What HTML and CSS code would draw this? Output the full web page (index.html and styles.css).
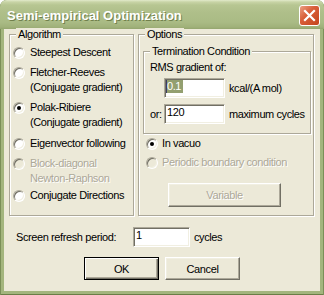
FILE: index.html
```html
<!doctype html>
<html lang="en">
<head>
    <meta charset="UTF-8">
    <title>Semi-empirical Optimization</title>
    <link rel="stylesheet" href="styles.css">
</head>
<body>
    <div class="window">
        <div class="titlebar">
            <span class="title">Semi-empirical Optimization</span>
            <span class="close">
                <svg width="19" height="19" viewBox="0 0 19 19"><path d="M5 5L14 14M14 5L5 14" stroke="#fff" stroke-width="2.2" stroke-linecap="square"/></svg>
            </span>
        </div>
        <div class="client">
            <div class="groups">
                <div class="group algo">
                    <div class="legend">Algorithm</div>
                    <div class="opt first"><span class="radio"></span><span class="label">Steepest Descent</span></div>
                    <div class="opt"><span class="radio"></span><span class="label">Fletcher-Reeves<br>(Conjugate gradient)</span></div>
                    <div class="opt"><span class="radio checked"></span><span class="label">Polak-Ribiere<br>(Conjugate gradient)</span></div>
                    <div class="opt eigen"><span class="radio"></span><span class="label">Eigenvector following</span></div>
                    <div class="opt disabled"><span class="radio"></span><span class="label">Block-diagonal<br>Newton-Raphson</span></div>
                    <div class="opt last"><span class="radio"></span><span class="label">Conjugate Directions</span></div>
                </div>
                <div class="group options">
                    <div class="legend">Options</div>
                    <div class="group term">
                        <div class="legend">Termination Condition</div>
                        <div class="text">RMS gradient of:</div>
                        <div class="field-row first">
                            <span class="prefix"></span>
                            <span class="edit"><span class="sel">0.1</span></span>
                            <span class="unit">kcal/(A mol)</span>
                        </div>
                        <div class="field-row">
                            <span class="prefix">or:</span>
                            <span class="edit">120</span>
                            <span class="unit">maximum cycles</span>
                        </div>
                    </div>
                    <div class="opt vacuo"><span class="radio checked"></span><span class="label">In vacuo</span></div>
                    <div class="opt disabled"><span class="radio"></span><span class="label">Periodic boundary condition</span></div>
                    <button class="btn variable" disabled>Variable</button>
                </div>
            </div>
            <div class="refresh">
                <span class="refresh-label">Screen refresh period:</span>
                <span class="edit small">1</span>
                <span class="unit">cycles</span>
            </div>
            <div class="buttons">
                <button class="btn default">OK</button>
                <button class="btn">Cancel</button>
            </div>
        </div>
    </div>
</body>
</html>
```

FILE: styles.css
```css
body {
    margin: 0;
    background: #fff;
    font-family: "Liberation Sans", Arial, sans-serif;
    font-size: 11px;
    letter-spacing: -0.4px;
    color: #000;
}

.window {
    width: 324px;
    height: 295px;
    display: flex;
    flex-direction: column;
    background: #a3b57d;
    border-radius: 7px 7px 0 0;
    box-shadow: inset 1px 0 0 #7b8f58, inset -1px 0 0 #7b8f58, inset 0 -1px 0 #6a7e47;
}

.titlebar {
    flex: none;
    height: 29px;
    box-sizing: border-box;
    padding: 5px 4px 0 7px;
    display: flex;
    justify-content: space-between;
    align-items: flex-start;
    border-radius: 7px 7px 0 0;
    background: linear-gradient(to bottom, #e2eacb 0, #c8d4a6 2px, #b7c692 5px, #afbf8a 12px, #aabb85 22px, #a0b17a 27px, #93a56e 29px);
}

.title {
    font-size: 13px;
    font-weight: bold;
    letter-spacing: 0;
    line-height: 21px;
    color: #fff;
    text-shadow: 1px 1px 0 #70804c;
}

.close {
    width: 21px;
    height: 21px;
    box-sizing: border-box;
    border: 1px solid #fff;
    border-radius: 3px;
    display: flex;
    background: linear-gradient(135deg, #eba084 0, #d9603a 40%, #c4441d 100%);
}

.client {
    flex: 1;
    margin: 0 4px 4px;
    padding: 5px 0 0 5px;
    background: #ece9d8;
    display: flex;
    flex-direction: column;
}

/* group boxes */
.groups {
    display: flex;
    gap: 4px;
    height: 182px;
}

.group {
    box-sizing: border-box;
    border: 1px solid #aca899;
    box-shadow: inset 1px 1px 0 #fff, 1px 1px 0 #fff;
}

.algo {
    width: 125px;
}

.options {
    width: 176px;
}

.legend {
    width: fit-content;
    margin: -7px 0 0 6px;
    padding: 0 2px;
    line-height: 13px;
    background: #ece9d8;
}

.term {
    margin: 10px 2px 0 4px;
    padding: 0 0 9px 6px;
}

.term .legend {
    margin-left: 0;
}

.text {
    margin-top: 2px;
    line-height: 15px;
}

.field-row {
    display: flex;
    align-items: center;
    margin-top: 6px;
    line-height: 15px;
}

.field-row.first {
    margin-top: 3px;
}

.prefix {
    width: 14px;
    flex: none;
}

.unit {
    margin-left: 4px;
}

/* edit boxes */
.edit {
    width: 61px;
    height: 20px;
    flex: none;
    box-sizing: border-box;
    padding: 1px 0 0 2px;
    line-height: 13px;
    background: #fff;
    border: 1px solid;
    border-color: #aca899 #fff #fff #aca899;
    box-shadow: inset 1px 1px 0 #716f64, inset -1px -1px 0 #f1efe2;
}

.edit.small {
    width: 57px;
}

.sel {
    display: inline-block;
    padding-right: 2px;
    background: #939f70;
    color: #fff;
    border-left: 1px solid #3c3c64;
    margin-left: -1px;
}

/* radio options */
.opt {
    display: flex;
    align-items: flex-start;
    gap: 5px;
    margin-top: 5px;
    line-height: 15px;
}

.algo .opt {
    margin-left: 3px;
}

.opt.first {
    margin-top: 4px;
}

.opt.eigen {
    margin-top: 6px;
}

.opt.last {
    margin-top: 2px;
}

.options .opt {
    margin-left: 7px;
    gap: 4px;
}

.opt.vacuo {
    margin-top: 2px;
}

.opt.vacuo + .opt {
    margin-top: 4px;
}

.radio {
    flex: none;
    width: 12px;
    height: 12px;
    margin-top: 2px;
    box-sizing: border-box;
    border-radius: 50%;
    background: #fff;
    border: 1px solid;
    border-color: #aca899 #fff #fff #aca899;
    box-shadow: inset 1px 1px 0 #716f64, inset -1px -1px 0 #f1efe2;
    display: flex;
    align-items: center;
    justify-content: center;
}

.radio.checked::after {
    content: "";
    width: 4px;
    height: 4px;
    border-radius: 50%;
    background: #000;
}

.disabled .radio {
    background: #ece9d8;
}

.disabled .label {
    color: #aca899;
    text-shadow: 1px 1px 0 #fff;
}

/* push buttons */
.btn {
    width: 75px;
    height: 23px;
    padding: 0;
    font: inherit;
    letter-spacing: inherit;
    color: #000;
    background: #ece9d8;
    border: 1px solid;
    border-color: #fff #716f64 #716f64 #fff;
    box-shadow: inset -1px -1px 0 #aca899, inset 1px 1px 0 #f1efe2;
}

.btn.default {
    border-color: #000;
    box-shadow: inset 1px 1px 0 #fff, inset -1px -1px 0 #716f64, inset -2px -2px 0 #aca899;
}

.btn.variable {
    display: block;
    width: 113px;
    height: 24px;
    margin: 13px 0 0 29px;
    color: #aca899;
    text-shadow: 1px 1px 0 #fff;
}

.refresh {
    display: flex;
    align-items: center;
    margin: 11px 0 0 7px;
    line-height: 15px;
}

.refresh-label {
    width: 117px;
    flex: none;
}

.buttons {
    display: flex;
    justify-content: center;
    gap: 6px;
    margin: 10px 0 0 -5px;
}
```
